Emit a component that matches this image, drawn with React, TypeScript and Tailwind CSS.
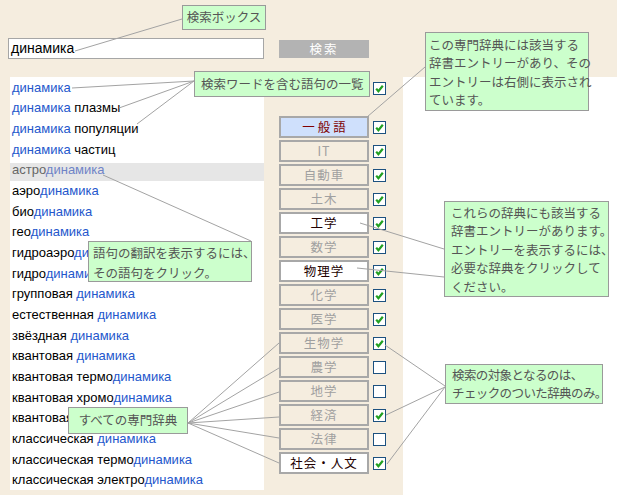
import React from "react";

const JP = "font-['Noto_Sans_CJK_JP',sans-serif]";

const rows: [string, string, string][] = [
  ["", "динамика", ""],
  ["", "динамика", " плазмы"],
  ["", "динамика", " популяции"],
  ["", "динамика", " частиц"],
  ["астро", "динамика", ""],
  ["аэро", "динамика", ""],
  ["био", "динамика", ""],
  ["гео", "динамика", ""],
  ["гидроаэро", "динамика", ""],
  ["гидро", "динамика", ""],
  ["групповая ", "динамика", ""],
  ["естественная ", "динамика", ""],
  ["звёздная ", "динамика", ""],
  ["квантовая ", "динамика", ""],
  ["квантовая термо", "динамика", ""],
  ["квантовая хромо", "динамика", ""],
  ["квантовая электро", "динамика", ""],
  ["классическая ", "динамика", ""],
  ["классическая термо", "динамика", ""],
  ["классическая электро", "динамика", ""],
];

type D = { name: string; state: "primary" | "on" | "off"; checked: boolean };
const dicts: D[] = [
  { name: "一般語", state: "primary", checked: true },
  { name: "IT", state: "off", checked: true },
  { name: "自動車", state: "off", checked: true },
  { name: "土木", state: "off", checked: true },
  { name: "工学", state: "on", checked: true },
  { name: "数学", state: "off", checked: true },
  { name: "物理学", state: "on", checked: true },
  { name: "化学", state: "off", checked: true },
  { name: "医学", state: "off", checked: true },
  { name: "生物学", state: "off", checked: true },
  { name: "農学", state: "off", checked: false },
  { name: "地学", state: "off", checked: false },
  { name: "経済", state: "off", checked: true },
  { name: "法律", state: "off", checked: false },
  { name: "社会・人文", state: "on", checked: true },
];

function Check({ checked }: { checked: boolean }) {
  return (
    <div className="w-[13px] h-[13px] border border-[#1c5180] bg-white shrink-0 flex items-center justify-center">
      {checked && (
        <svg width="11" height="11" viewBox="0 0 11 11">
          <path d="M2.2 5.6 L4.4 8.2 L8.8 2.8" stroke="#22a022" strokeWidth="2.2" fill="none" />
        </svg>
      )}
    </div>
  );
}

function Callout({ className, children }: { className: string; children: React.ReactNode }) {
  return (
    <div
      className={`absolute bg-[#ccffcc] border border-[#9a9a9a] text-[#555555] text-[12.5px] whitespace-nowrap ${JP} ${className}`}
    >
      {children}
    </div>
  );
}

const lines: [number, number, number, number][] = [
  [75, 51, 182, 19],
  [72, 88, 194, 81],
  [119, 108, 194, 81],
  [137, 124, 194, 81],
  [425, 67, 367, 117],
  [103, 175, 251, 241],
  [360, 223, 444, 249],
  [357, 268, 444, 277],
  [385, 345, 445, 386],
  [386, 415, 445, 387],
  [387, 464, 445, 387],
  [188, 423, 279, 343],
  [188, 423, 279, 368],
  [188, 423, 279, 392],
  [188, 423, 279, 417],
  [188, 423, 279, 438],
  [188, 423, 279, 463],
];

export default function App() {
  return (
    <div className="relative w-[617px] h-[495px] bg-[#f5eddf] overflow-hidden font-['Liberation_Sans',Arial,sans-serif]">
      {/* search row */}
      <div className="flex items-start pt-[38px] pl-[8px] gap-[15px]">
        <div className="w-[256px] h-[21px] bg-white border border-[#a6a6a6] flex items-center pl-[2px] text-[14px] text-black">
          динамика
        </div>
        <div className={`mt-[2px] w-[90px] h-[18px] bg-[#b3b3b3] text-white text-[12.5px] flex items-center justify-center tracking-[2px] ${JP}`}>
          検索
        </div>
      </div>

      {/* main */}
      <div className="flex mt-[18px] h-[418px]">
        <div className="ml-[10px] w-[254px] h-[413px] bg-white overflow-hidden pt-[0.5px]">
          {rows.map(([a, b, c], i) => {
            const hl = i === 4;
            return (
              <div
                key={i}
                className={`h-[20.68px] leading-[20.68px] pl-[2px] text-[13px] whitespace-nowrap ${
                  hl ? "bg-[linear-gradient(to_bottom,transparent_3px,#e6e6e6_3px)]" : ""
                }`}
              >
                <span className={hl ? "text-[#666666]" : "text-black"}>{a}</span>
                <span className={hl ? "text-[#6e83c6]" : "text-[#2457cc]"}>{b}</span>
                <span className="text-black">{c}</span>
              </div>
            );
          })}
        </div>

        <div className="w-[139px] pt-[5px]">
          <div className="flex pl-[109px]">
            <Check checked={true} />
          </div>
          <div className="mt-[21px] pl-[15px] flex flex-col gap-[2px]">
            {dicts.map((d) => (
              <div key={d.name} className="flex items-center gap-[4px]">
                <div
                  className={`w-[90px] h-[22px] border-2 border-[#a8a8a8] flex items-center justify-center text-[12.5px] ${JP} ${
                    d.state === "primary"
                      ? "bg-[#cfe0fc] text-[#800000] tracking-[3px] pl-[3px]"
                      : d.state === "on"
                      ? "bg-white text-[#220000] tracking-[1px]"
                      : "bg-[#f5eddf] text-[#a0a0a0] tracking-[1px]"
                  }`}
                >
                  {d.name}
                </div>
                <Check checked={d.checked} />
              </div>
            ))}
          </div>
        </div>

        <div className="flex-1 bg-white" />
      </div>

      {/* connector lines */}
      <svg className="absolute left-0 top-0 pointer-events-none" width="617" height="495">
        {lines.map(([x1, y1, x2, y2], i) => (
          <line key={i} x1={x1} y1={y1} x2={x2} y2={y2} stroke="#a3a3a3" strokeWidth="1" />
        ))}
      </svg>

      {/* callouts */}
      <Callout className="left-[182px] top-[5px] w-[84px] h-[25px] flex items-center justify-center">
        検索ボックス
      </Callout>
      <Callout className="left-[194px] top-[71px] w-[176px] h-[26px] flex items-center pl-[6px]">
        検索ワードを含む語句の一覧
      </Callout>
      <Callout className="left-[425px] top-[32px] w-[164px] h-[79px] pl-[3px] pt-[3px] leading-[18.3px]">
        この専門辞典には該当する
        <br />
        辞書エントリーがあり、その
        <br />
        エントリーは右側に表示され
        <br />
        ています。
      </Callout>
      <Callout className="left-[88px] top-[241px] w-[164px] h-[41px] pl-[4px] pt-[1px] leading-[19.5px]">
        語句の翻訳を表示するには、
        <br />
        その語句をクリック。
      </Callout>
      <Callout className="left-[444px] top-[201px] w-[165px] h-[96px] pl-[6px] pt-[2px] leading-[18.4px]">
        これらの辞典にも該当する
        <br />
        辞書エントリーがあります。
        <br />
        エントリーを表示するには、
        <br />
        必要な辞典をクリックして
        <br />
        ください。
      </Callout>
      <Callout className="left-[445px] top-[364px] w-[158px] h-[40px] pl-[6px] pt-[1px] leading-[18.3px] tracking-[-0.6px]">
        検索の対象となるのは、
        <br />
        チェックのついた辞典のみ。
      </Callout>
      <Callout className="left-[68px] top-[407px] w-[120px] h-[27px] flex items-center justify-center">
        すべての専門辞典
      </Callout>
    </div>
  );
}
